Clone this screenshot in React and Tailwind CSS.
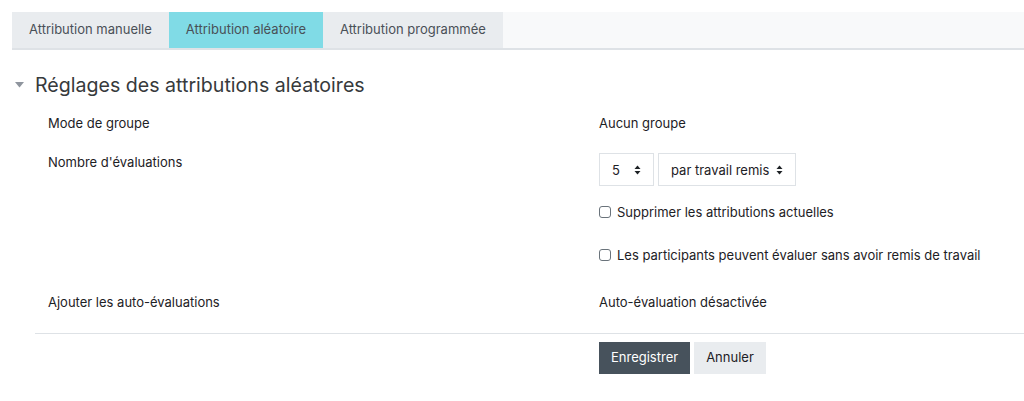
import React from 'react';

function SelectArrows() {
    return (
        <svg width="7" height="10" viewBox="0 0 7 10" className="shrink-0">
            <path d="M3.5 0.5 L6.5 4 H0.5 Z" fill="#1d2125" />
            <path d="M3.5 9.5 L6.5 6 H0.5 Z" fill="#1d2125" />
        </svg>
    );
}

function Checkbox({ label, className }) {
    return (
        <label className={`flex items-center h-5 ${className}`}>
            <span className="w-[12px] h-[12px] rounded-[3px] border border-[#6a737b] bg-white shrink-0" />
            <span className="ml-[6px]">{label}</span>
        </label>
    );
}

export default function App() {
    const tabs = ['Attribution manuelle', 'Attribution aléatoire', 'Attribution programmée'];

    return (
        <div className="w-[1024px] h-[401px] bg-white pt-3 pl-3 text-[13px] text-[#1d2125] overflow-hidden" style={{ fontFamily: 'Inter, "Liberation Sans", sans-serif' }}>

            {/* Tabs */}
            <div className="flex bg-[#f8f9fa] border-b-2 border-[#dee2e6]">
                {tabs.map((t, i) => (
                    <div
                        key={t}
                        className={`h-9 flex items-center px-[17px] text-[#495057] ${i === 1 ? 'bg-[#80dbe6]' : 'bg-[#e9ecef]'}`}
                    >
                        {t}
                    </div>
                ))}
            </div>

            {/* Section heading */}
            <div className="flex items-center h-6 mt-[23px]">
                <svg width="9" height="6" viewBox="0 0 9 6" className="ml-[3px] mr-[11px]">
                    <path d="M0 0 H9 L4.5 5.5 Z" fill="#8f959e" />
                </svg>
                <h3 className="text-[19.6px] text-[#373a3c] leading-6">Réglages des attributions aléatoires</h3>
            </div>

            {/* Rows */}
            <div className="flex mt-4 leading-5">
                <div className="w-[587px] pl-9">Mode de groupe</div>
                <div>Aucun groupe</div>
            </div>

            <div className="flex mt-[19px] leading-5">
                <div className="w-[587px] pl-9">Nombre d'évaluations</div>
                <div className="flex flex-col">
                    <div className="flex gap-1 mt-px">
                        <div className="h-[33px] w-[55px] border border-[#dee2e6] flex items-center justify-between px-[12px]">
                            <span>5</span>
                            <SelectArrows />
                        </div>
                        <div className="h-[33px] w-[138px] border border-[#dee2e6] flex items-center justify-between px-[12px]">
                            <span>par travail remis</span>
                            <SelectArrows />
                        </div>
                    </div>
                    <Checkbox className="mt-4" label="Supprimer les attributions actuelles" />
                    <Checkbox className="mt-[23px]" label="Les participants peuvent évaluer sans avoir remis de travail" />
                </div>
            </div>

            <div className="flex mt-[27px] leading-5">
                <div className="w-[587px] pl-9">Ajouter les auto-évaluations</div>
                <div>Auto-évaluation désactivée</div>
            </div>

            <div className="ml-[23px] mt-[21px] border-t border-[#dee2e6]" />

            <div className="flex gap-1 mt-2 pl-[587px]">
                <button className="h-8 px-[12px] bg-[#47525c] text-white">Enregistrer</button>
                <button className="h-8 px-[12px] bg-[#e9ecef] text-[#1d2125]">Annuler</button>
            </div>
        </div>
    );
}
